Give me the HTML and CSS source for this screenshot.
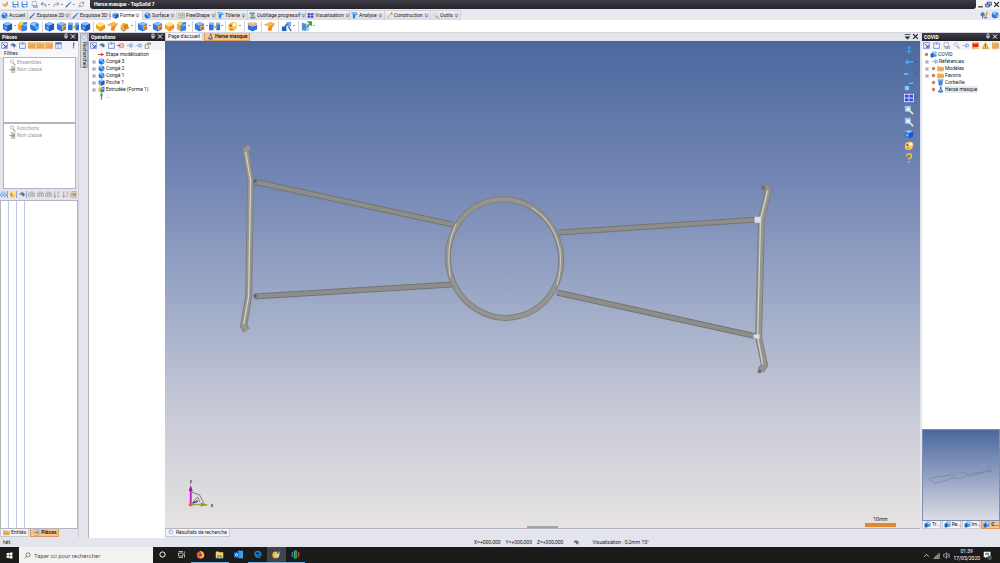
FILE: index.html
```html
<!DOCTYPE html>
<html lang="fr">
<head>
  <meta charset="UTF-8">
  <meta name="viewport" content="width=device-width, initial-scale=1.0">
  <title>Herse masque - TopSolid 7</title>
  <link rel="stylesheet" href="styles.css">
</head>
<body>
  <!-- Icon set -->
  <svg class="sprite" aria-hidden="true">
    <symbol id="cube" viewBox="0 0 12 12">
      <path d="M1 3l5-2 5 2v6l-5 2.500-5-2.500z" fill="#2f74e6"/>
      <path d="M1 3l5-2 5 2-5 2.200z" fill="#8cc0fb"/>
      <path d="M6 5.200L11 3v6l-5 2.500z" fill="#2456b8"/>
      <path d="M3 6l2 1v2L3 8z" fill="#9fd0fb"/>
    </symbol>
    <symbol id="cube-cut" viewBox="0 0 12 12">
      <path d="M1 3l5-2 5 2v6l-5 2.500-5-2.500z" fill="#3478e4"/>
      <path d="M1 3l5-2 5 2-5 2.200z" fill="#8cc0fb"/>
      <path d="M6 6l5-2v3.500L7 10z" fill="#f3a33a"/>
      <path d="M8 7l3-1v2l-3 1z" fill="#d9631c"/>
    </symbol>
    <symbol id="cube-half" viewBox="0 0 12 12">
      <path d="M1 3l5-2v10.500L1 9z" fill="#f0a63c"/>
      <path d="M5 2l6-1v9l-6 1.500z" fill="#3a7fe4"/>
      <path d="M2 1l4-1 1 4-4 1z" fill="#f8d56b"/>
      <path d="M7 4l4-1v2l-4 1z" fill="#7fb6f8"/>
    </symbol>
    <symbol id="cut-base" viewBox="0 0 12 12">
      <path d="M1 4l5 2 5-2v5l-5 2.500L1 9z" fill="#2c72e0"/>
      <path d="M1 2l5-1 5 1v2L6 6 1 4z" fill="#f5b277"/>
      <path d="M3 2l3-1 3 1-3 1z" fill="#cfe4fb"/>
    </symbol>
    <symbol id="ball" viewBox="0 0 12 12">
      <circle cx="6" cy="6" r="5" fill="#2a72dc"/>
      <path d="M2 4a5 5 0 0 1 7-2L6 6z" fill="#92c8fa"/>
      <path d="M6 6l5-1a5 5 0 0 1-3 5z" fill="#4fb0f0"/>
    </symbol>
    <symbol id="pair" viewBox="0 0 12 12">
      <path d="M0 2h5v8H0zM8 2h4v8H8z" fill="#2f72dc"/>
      <path d="M0 2h5v2H0zM8 2h4v2H8z" fill="#7db8fa"/>
      <path d="M5 5h3v3H5z" fill="#d9bd4a"/>
    </symbol>
    <symbol id="orange" viewBox="0 0 12 12">
      <path d="M1 4l5-3 5 3v4l-5 3.500L1 8z" fill="#f5a61f"/>
      <path d="M1 4l5-3 5 3-5 2.500z" fill="#fdea8a"/>
      <path d="M6 6.500L11 4v4l-5 3.500z" fill="#ee8c28"/>
    </symbol>
    <symbol id="sheet" viewBox="0 0 12 12">
      <path d="M0 4l7-3 5 2-3 4-1 4-4-1 1-4z" fill="#f08a21"/>
      <path d="M0 4l7-3 5 2-6 3z" fill="#fbb85b"/>
    </symbol>
    <symbol id="wedge" viewBox="0 0 12 12">
      <path d="M1 8l3-6 5 1 2 5-5 3z" fill="#f5b23e"/>
      <path d="M4 5l5-2 2 5-5 1z" fill="#e2841d"/>
      <path d="M2 9l3 2 2-1" fill="none" stroke="#7b6c4a"/>
    </symbol>
    <symbol id="chisel" viewBox="0 0 12 12">
      <path d="M2 10L9 3" stroke="#e8a04a" stroke-width="1.500"/>
      <path d="M8 1l3 3" stroke="#b5763a" stroke-width="2"/>
    </symbol>
    <symbol id="save" viewBox="0 0 12 12">
      <path d="M1 1h10v10H1z" fill="#4d8fd8"/>
      <path d="M3 1h6v4H3zM3 7h6v4H3z" fill="#fff"/>
      <path d="M4 8h2v3H4z" fill="#2f5f9d"/>
    </symbol>
    <symbol id="save-gray" viewBox="0 0 12 12">
      <path d="M2 1h7v7H2z" fill="#fff" stroke="#7c879a"/>
      <path d="M4 8h7v3H4z" fill="#c0c5cf" stroke="#7c879a"/>
    </symbol>
    <symbol id="undo" viewBox="0 0 12 12">
      <path d="M2 5h5q4 0 3 5M5 2L2 5l3 3" fill="none" stroke="#70757f" stroke-width="1.500"/>
    </symbol>
    <symbol id="redo" viewBox="0 0 12 12">
      <path d="M10 5H5q-4 0-3 5M7 2l3 3-3 3" fill="none" stroke="#8a8e96" stroke-width="1.500"/>
    </symbol>
    <symbol id="pen" viewBox="0 0 12 12">
      <path d="M2 10L10 2" stroke="#2471d8" stroke-width="2"/>
      <path d="M1 11l3-1-2-2z" fill="#333"/>
      <circle cx="10" cy="2" r="1.500" fill="#8ec2f6"/>
    </symbol>
    <symbol id="refresh" viewBox="0 0 12 12">
      <path d="M2 5q4-5 8-1M10 7q-4 5-8 1M10 1v3H7M2 11V8h3" fill="none" stroke="#858b94" stroke-width="1.300"/>
    </symbol>
    <symbol id="logo" viewBox="0 0 12 12">
      <path d="M1 4l5 1v5H4L1 7z" fill="#f1b92e"/>
      <path d="M5 8l5-7v5L6 10z" fill="#ef8a3c"/>
      <path d="M6 5l4-4" stroke="#5d86c9"/>
    </symbol>
    <symbol id="select" viewBox="0 0 12 12">
      <path d="M1 1h10v10H1z" fill="#e8eefc" stroke="#4763c4"/>
      <path d="M3 3l6 6M9 5v4H5" stroke="#2645b4" stroke-width="1.500" fill="none"/>
    </symbol>
    <symbol id="bird" viewBox="0 0 12 12">
      <path d="M0 6l4-4 4 1 4 5-3-2v3H6L4 6z" fill="#5e739f"/>
    </symbol>
    <symbol id="frame" viewBox="0 0 12 12">
      <path d="M1 2h3M8 2h3M1 2v9h10V2M5 1h2v3H5z" fill="none" stroke="#5a83cd" stroke-width="1.300"/>
    </symbol>
    <symbol id="folder" viewBox="0 0 12 12">
      <path d="M1 3h4l1 1h5v6H1z" fill="#f9c55c" stroke="#c98a3b"/>
      <path d="M3 7h6" stroke="#99663c"/>
    </symbol>
    <symbol id="window" viewBox="0 0 12 12">
      <path d="M1 1h10v10H1z" fill="#eaf0fc" stroke="#6b82be"/>
      <path d="M1 1h10v3H1z" fill="#4a73c8"/>
      <path d="M5 4v7" stroke="#6b82be"/>
    </symbol>
    <symbol id="arrow-r" viewBox="0 0 12 12">
      <path d="M0 5h5V3l6 3-6 3V7H0z" fill="#c8503c"/>
    </symbol>
    <symbol id="insert" viewBox="0 0 12 12">
      <path d="M4 3h7v6H4z" fill="#f8cfbf" stroke="#cf5a3c"/>
      <path d="M0 6h6" stroke="#cf3c28" stroke-width="1.500"/>
    </symbol>
    <symbol id="node" viewBox="0 0 12 12">
      <path d="M1 6h4l3-4M5 6l3 4" stroke="#6d8fce" fill="none"/>
      <path d="M7 4h4v4H7z" fill="#e3ecfb" stroke="#5a83cb"/>
    </symbol>
    <symbol id="export" viewBox="0 0 12 12">
      <path d="M2 4h6v7H2z" fill="#e4f5e4" stroke="#3d8a3d"/>
      <path d="M5 2h6v3" fill="none" stroke="#c33b2a" stroke-width="1.500"/>
    </symbol>
    <symbol id="sheet-out" viewBox="0 0 12 12">
      <path d="M1 2l5 1v8l-5-1z" fill="#4d93dc"/>
      <path d="M6 3h3v7l-3 1z" fill="#a9cdf3"/>
      <path d="M6 7l4-4M8 1h4v4z" stroke="#39a545" stroke-width="1.500" fill="#39a545"/>
    </symbol>
    <symbol id="move" viewBox="0 0 12 12">
      <path d="M6 1h5v5H6z" fill="#7da9e4"/>
      <path d="M1 6h5v5H1z" fill="#1f5fc4"/>
      <path d="M8 6l3 5M4 6l3-3" stroke="#2c5ca8" stroke-width="1.300"/>
    </symbol>
    <symbol id="bang" viewBox="0 0 12 12">
      <path d="M5 1h3L7 8H5z" fill="#2c8cd8"/>
      <circle cx="6" cy="10" r="1.300" fill="#2c8cd8"/>
    </symbol>
    <symbol id="bang-green" viewBox="0 0 12 12">
      <path d="M4 1h4v2L7 8H5L4 3z" fill="#3aa545"/>
      <circle cx="6" cy="10" r="1.500" fill="#3aa545"/>
    </symbol>
    <symbol id="pin" viewBox="0 0 12 12">
      <path d="M4 1h4v6H4zM2 7h8M6 7v4" fill="none" stroke="currentColor" stroke-width="1.300"/>
    </symbol>
    <symbol id="close" viewBox="0 0 12 12">
      <path d="M2 2l8 8M10 2l-8 8" stroke="currentColor" stroke-width="2"/>
    </symbol>
    <symbol id="drop" viewBox="0 0 12 12">
      <path d="M1 2h10v1.500H1zM1 6h10l-5 5z" fill="currentColor"/>
    </symbol>
    <symbol id="minimize" viewBox="0 0 12 12"><path d="M2 9h8v2H2z" fill="#222"/></symbol>
    <symbol id="restore" viewBox="0 0 12 12">
      <path d="M4 2h7v5H4zM1 5h7v5H1z" fill="#e2e9fa" stroke="#2c478c" stroke-width="1.500"/>
    </symbol>
    <symbol id="mill" viewBox="0 0 12 12">
      <path d="M1 4q3-4 6 0v3H5v4H3V7H1z" fill="#3f78c4"/>
      <path d="M8 10L11 1" stroke="#e79531" stroke-width="2"/>
      <path d="M6 9h5v2H6z" fill="#5487cf"/>
    </symbol>
    <symbol id="fold" viewBox="0 0 12 12">
      <path d="M0 1h9l3 3-4 1-2 7-3-2V4z" fill="#2f86dd"/>
      <path d="M0 1h9l3 3H3z" fill="#7cc0f5"/>
    </symbol>
    <symbol id="grid" viewBox="0 0 12 12">
      <path d="M1 2h10v8H1z" fill="#e6e8d4" stroke="#8f9a72"/>
      <path d="M1 5q5 3 10 0M5 2v8M8 2v8" stroke="#8f9a72" fill="none"/>
    </symbol>
    <symbol id="tooling" viewBox="0 0 12 12">
      <path d="M1 1h9v3H1zM2 8h9v3H2z" fill="#6f8fb4"/>
      <path d="M3 4h6v4H3z" fill="#7cb583"/>
    </symbol>
    <symbol id="gray-node" viewBox="0 0 12 12">
      <path d="M4 1h6v10H4z" fill="#e8e8e8" stroke="#9a9a9a"/>
      <path d="M0 6h6M6 4h3v4H6z" fill="#999" stroke="#888"/>
    </symbol>
    <symbol id="gray-link" viewBox="0 0 12 12">
      <path d="M1 4h4v5H1zM7 4h4v5H7zM3 2h7" fill="#ddd" stroke="#888"/>
    </symbol>
    <symbol id="pair-lens" viewBox="0 0 12 12">
      <path d="M2 2h8" stroke="#5b87cf"/>
      <circle cx="3" cy="7" r="2.500" fill="#cfe3fb" stroke="#3e76cf"/>
      <circle cx="9" cy="7" r="2.500" fill="#cfe3fb" stroke="#3e76cf"/>
    </symbol>
    <symbol id="sort" viewBox="0 0 12 12">
      <path d="M3 1v9M1 8l2 3 2-3M7 2h4M8 5h3M7 9h4" fill="none" stroke="#777"/>
    </symbol>
    <symbol id="lens" viewBox="0 0 12 12">
      <path d="M1 1h7v7H1z" fill="#b4d0f2"/>
      <circle cx="5" cy="5" r="3" fill="#eaf5fe" stroke="#7fa6d8"/>
      <path d="M7 7l4 4" stroke="#e9e2c6" stroke-width="2"/>
    </symbol>
    <symbol id="gray-lens" viewBox="0 0 12 12">
      <circle cx="5" cy="4" r="3" fill="#f2f2f2" stroke="#aaa"/>
      <path d="M7 7l4 4" stroke="#999" stroke-width="2"/>
    </symbol>
    <symbol id="view-up" viewBox="0 0 12 12"><path d="M6 1l3 3H7v3h3v1H7v3H5V8H2V7h3V4H3z" fill="#2ea0ee"/></symbol>
    <symbol id="view-left" viewBox="0 0 12 12"><path d="M5 2L1 6l4 4V7h6V5H5z" fill="#3fa9f3"/></symbol>
    <symbol id="view-right" viewBox="0 0 12 12">
      <path d="M0 5h5v2H0z" fill="#62bbf7"/><path d="M7 4h4v4H7z" fill="#2987df"/>
    </symbol>
    <symbol id="view-iso" viewBox="0 0 12 12">
      <path d="M6 1h5v5H6z" fill="#2b78d6"/><path d="M1 6h5v5H1z" fill="#85c5f7"/><path d="M6 3l5-1" stroke="#b9dffc"/>
    </symbol>
    <symbol id="view-grid" viewBox="0 0 12 12">
      <path d="M0 1h12v10H0z" fill="#d9e0ff"/><path d="M1 2h4.500v3.500H1zM6.500 2H11v3.500H6.500zM1 6.500h4.500V10H1zM6.500 6.500H11V10H6.500z" fill="#3c48d9"/>
    </symbol>
    <symbol id="pic-node" viewBox="0 0 12 12">
      <path d="M4 1h7v9H4z" fill="#4da0ea"/><path d="M1 4h5v7H1z" fill="#2a5cae"/><path d="M6 2h4v3H6z" fill="#b9dffc"/>
    </symbol>
    <symbol id="palette" viewBox="0 0 12 12">
      <path d="M1 7q0-6 6-6 5 0 4 5-1 5-6 5-4 0-4-4z" fill="#f3c95b"/>
      <circle cx="4" cy="5" r="1.300" fill="#cf3e2a"/><circle cx="8" cy="4" r="1.800" fill="#fff"/><circle cx="5" cy="9" r="1.300" fill="#d9812c"/>
    </symbol>
    <symbol id="help" viewBox="0 0 12 12">
      <path d="M3 4q0-3 3-3t3 3q0 2-3 3v1" fill="none" stroke="#e8c23c" stroke-width="1.800"/><circle cx="6" cy="10.500" r="1.200" fill="#e8c23c"/>
    </symbol>
    <symbol id="flag" viewBox="0 0 12 12"><path d="M1 2l5 1 5-1v6L6 9 2 8v3H1z" fill="#d92a1c"/></symbol>
    <symbol id="warn" viewBox="0 0 12 12">
      <path d="M6 1l5 10H1z" fill="#fbd029" stroke="#a37c10"/><path d="M6 4v4M6 9v1" stroke="#222"/>
    </symbol>
    <symbol id="bin" viewBox="0 0 12 12"><path d="M2 3h8l-1 8H3zM1 1h10v1.500H1z" fill="#3e86d8"/></symbol>
    <symbol id="part" viewBox="0 0 12 12">
      <path d="M5 1h3v4l3 5-5 2-5-2 4-5z" fill="#3a80d9"/><path d="M4 8l3-3v4z" fill="#bcdcfb"/>
    </symbol>
    <symbol id="part-gray" viewBox="0 0 12 12">
      <path d="M5 1h3v4l3 5-5 2-5-2 4-5z" fill="#6d7889"/><path d="M4 8l3-3v4z" fill="#cfd8e4"/>
    </symbol>
    <symbol id="star" viewBox="0 0 12 12"><circle cx="6" cy="6" r="4" fill="#d07a52"/></symbol>
  </svg>

  <header class="titlebar">
    <div class="quick">
      <button aria-label="Menu"><svg class="icon"><use href="#logo"/></svg></button>
      <button aria-label="Enregistrer"><svg class="icon"><use href="#save"/></svg></button>
      <button aria-label="Enregistrer tout"><svg class="icon"><use href="#save"/></svg></button>
      <button aria-label="Archiver"><svg class="icon"><use href="#save-gray"/></svg></button>
      <button class="more" aria-label="Annuler"><svg class="icon"><use href="#undo"/></svg></button>
      <button class="more" aria-label="Rétablir"><svg class="icon"><use href="#redo"/></svg></button>
      <button class="more" aria-label="Crayon"><svg class="icon"><use href="#pen"/></svg></button>
      <button aria-label="Rafraîchir"><svg class="icon"><use href="#refresh"/></svg></button>
    </div>
    <h1>Herse masque - TopSolid 7</h1>
    <div class="window-buttons">
      <button aria-label="Réduire"><svg class="icon"><use href="#minimize"/></svg></button>
      <button aria-label="Restaurer"><svg class="icon"><use href="#restore"/></svg></button>
      <button aria-label="Fermer"><svg class="icon"><use href="#close"/></svg></button>
    </div>
  </header>

  <nav class="ribbon">
    <button class="plain"><svg class="icon"><use href="#ball"/></svg>Accueil</button>
    <button><svg class="icon"><use href="#pen"/></svg>Esquisse 2D<svg class="mini"><use href="#drop"/></svg></button>
    <button><svg class="icon"><use href="#pen"/></svg>Esquisse 3D<svg class="mini"><use href="#drop"/></svg></button>
    <button class="active"><svg class="icon"><use href="#cube"/></svg>Forme<svg class="mini"><use href="#drop"/></svg></button>
    <button><svg class="icon"><use href="#ball"/></svg>Surface<svg class="mini"><use href="#drop"/></svg></button>
    <button><svg class="icon"><use href="#grid"/></svg>FreeShape<svg class="mini"><use href="#drop"/></svg></button>
    <button><svg class="icon"><use href="#fold"/></svg>Tôlerie<svg class="mini"><use href="#drop"/></svg></button>
    <button><svg class="icon"><use href="#tooling"/></svg>Outillage progressif<svg class="mini"><use href="#drop"/></svg></button>
    <button><svg class="icon"><use href="#view-grid"/></svg>Visualisation<svg class="mini"><use href="#drop"/></svg></button>
    <button><svg class="icon"><use href="#fold"/></svg>Analyse<svg class="mini"><use href="#drop"/></svg></button>
    <button><svg class="icon"><use href="#chisel"/></svg>Construction<svg class="mini"><use href="#drop"/></svg></button>
    <button><svg class="icon"><use href="#gray-lens"/></svg>Outils<svg class="mini"><use href="#drop"/></svg></button>
    <span class="ribbon-end">
      <svg><use href="#mill"/></svg>
      <svg><use href="#ball"/></svg>
    </span>
  </nav>

  <div class="toolbar">
    <div class="group">
      <button class="more" aria-label="Extrudée"><svg><use href="#cube"/></svg></button>
      <button aria-label="Tournée"><svg><use href="#cube-half"/></svg></button>
      <button aria-label="Sphère"><svg><use href="#ball"/></svg></button>
    </div>
    <div class="group">
      <button aria-label="Poche"><svg><use href="#cube"/></svg></button>
      <button aria-label="Bossage"><svg><use href="#cube-cut"/></svg></button>
      <button aria-label="Répétition"><svg><use href="#pair"/></svg></button>
      <button aria-label="Coque"><svg><use href="#cube"/></svg></button>
    </div>
    <div class="group">
      <button aria-label="Congé"><svg><use href="#orange"/></svg></button>
      <button aria-label="Chanfrein"><svg><use href="#sheet"/></svg></button>
      <button class="more" aria-label="Dépouille"><svg><use href="#wedge"/></svg></button>
    </div>
    <div class="group">
      <button class="more" aria-label="Perçage"><svg><use href="#cube-cut"/></svg></button>
      <button aria-label="Rainure"><svg><use href="#cube-cut"/></svg></button>
      <button aria-label="Nervure"><svg><use href="#orange"/></svg></button>
      <button class="more" aria-label="Gravure"><svg><use href="#cube-half"/></svg></button>
    </div>
    <div class="group">
      <button class="more" aria-label="Union"><svg><use href="#cube-cut"/></svg></button>
      <button class="more" aria-label="Symétrie"><svg><use href="#pair"/></svg></button>
    </div>
    <div class="group wide">
      <button class="more" aria-label="Couleur"><svg><use href="#palette"/></svg></button>
    </div>
    <div class="group wide">
      <button aria-label="Coupe"><svg><use href="#cut-base"/></svg></button>
    </div>
    <div class="group wide">
      <button aria-label="Face"><svg><use href="#sheet"/></svg></button>
    </div>
    <div class="group wide">
      <button class="more" aria-label="Déplacer"><svg><use href="#move"/></svg></button>
    </div>
    <div class="group">
      <button class="more" aria-label="Exporter"><svg><use href="#sheet-out"/></svg></button>
    </div>
  </div>

  <main class="workspace">
    <section class="panel parts">
      <h2>Pièces<span><svg class="icon"><use href="#pin"/></svg><svg class="icon"><use href="#close"/></svg></span></h2>
      <div class="tools">
        <svg class="icon"><use href="#select"/></svg>
        <svg class="icon"><use href="#bird"/></svg>
        <svg class="icon"><use href="#frame"/></svg>
        <span class="on"><svg class="icon"><use href="#folder"/></svg><svg class="icon"><use href="#folder"/></svg><svg class="icon"><use href="#folder"/></svg></span>
        <svg class="icon"><use href="#window"/></svg>
        <svg class="icon last"><use href="#bang"/></svg>
      </div>
      <p class="filter-label">Filtres</p>
      <ul class="tree muted box">
        <li><svg class="icon"><use href="#gray-lens"/></svg>Ensembles</li>
        <li><svg class="icon"><use href="#gray-node"/></svg>Non classé</li>
      </ul>
      <ul class="tree muted box">
        <li><svg class="icon"><use href="#gray-lens"/></svg>Fonctions</li>
        <li><svg class="icon"><use href="#gray-node"/></svg>Non classé</li>
      </ul>
      <div class="column-tools">
        <span><svg class="icon"><use href="#pair-lens"/></svg></span>
        <span><svg class="icon"><use href="#palette"/></svg></span>
        <span><svg class="icon"><use href="#bird"/></svg></span>
        <svg class="icon"><use href="#gray-link"/></svg>
        <svg class="icon"><use href="#gray-link"/></svg>
        <svg class="icon"><use href="#gray-link"/></svg>
        <svg class="icon"><use href="#sort"/></svg>
        <svg class="icon"><use href="#sort"/></svg>
        <svg class="icon on"><use href="#gray-node"/></svg>
      </div>
      <div class="columns"><i></i><i></i><i></i></div>
      <div class="tabs">
        <button><svg class="icon"><use href="#folder"/></svg>Entités</button>
        <button class="active"><svg class="icon"><use href="#gray-node"/></svg>Pièces</button>
      </div>
    </section>

    <div class="side-strip">
      <button><svg class="icon"><use href="#lens"/></svg>Recherches</button>
    </div>

    <section class="panel operations">
      <h2>Opérations<span><svg class="icon"><use href="#pin"/></svg><svg class="icon"><use href="#close"/></svg></span></h2>
      <div class="tools">
        <svg class="icon"><use href="#select"/></svg>
        <svg class="icon"><use href="#bird"/></svg>
        <svg class="icon"><use href="#frame"/></svg>
        <svg class="icon"><use href="#insert"/></svg>
        <svg class="icon"><use href="#node"/></svg>
        <svg class="icon"><use href="#node"/></svg>
        <svg class="icon"><use href="#export"/></svg>
      </div>
      <ul class="tree fill">
        <li><b></b><svg class="icon"><use href="#arrow-r"/></svg>Étape modélisation</li>
        <li><b class="plus"></b><svg class="icon"><use href="#ball"/></svg>Congé 3</li>
        <li><b class="plus"></b><svg class="icon"><use href="#ball"/></svg>Congé 2</li>
        <li><b class="plus"></b><svg class="icon"><use href="#ball"/></svg>Congé 1</li>
        <li><b class="plus"></b><svg class="icon"><use href="#cube"/></svg>Poche 1</li>
        <li><b class="plus"></b><svg class="icon"><use href="#cube-half"/></svg>Extrudée (Forme 1)</li>
        <li><b></b><svg class="icon"><use href="#bang-green"/></svg>...</li>
      </ul>
    </section>

    <section class="document">
      <div class="tabs top">
        <button>Page d'accueil</button>
        <button class="active"><svg class="icon"><use href="#part-gray"/></svg>Herse masque</button>
        <span class="tab-end"><svg class="icon"><use href="#drop"/></svg><svg class="icon"><use href="#close"/></svg></span>
      </div>
      <div class="viewport">
        <svg class="model" viewBox="165 41 755 488" role="img" aria-label="Herse masque">
          <defs>
            <g id="rods">
              <path d="M254 182L453 225M254 297L452 285M559 233L757 220M557 293L757 337"/>
            </g>
            <g id="posts">
              <path d="M249 147L245 150L250 180L248 297L243 327L246 331"/>
              <path d="M765 187L769 190L762 219L759 338L765 366L761 371"/>
            </g>
            <g id="ring"><ellipse cx="504.500" cy="259" rx="56.500" ry="59.500" transform="rotate(-14 504.500 259)"/></g>
          </defs>
          <g fill="none" stroke-linejoin="round">
            <g stroke="#737574" stroke-width="6"><use href="#rods"/></g>
            <g stroke="#8d8e8a" stroke-width="4"><use href="#rods"/></g>
            <g stroke="#7e7f7c" stroke-width="7"><use href="#posts"/><use href="#ring" stroke-width="6"/></g>
            <g stroke="#969691" stroke-width="5"><use href="#posts"/><use href="#ring" stroke-width="4"/></g>
            <path d="M245 152L250 181L248 297L243 325M768 191L761 220L758 337L763 365" stroke="#d3d0c8" stroke-width="1.300"/>
            <path d="M450 278Q445 246 456 224M532 208Q554 222 560 250Q562 270 557 286" stroke="#cfccc4"/>
          </g>
          <path d="M755 217h6v6h-6zM754 335h6v4h-6z" fill="#dcdfe8"/>
          <path d="M253 180h3v3h-3zM253 295h3v3h-3z" fill="#5c6065"/>
          <circle cx="764" cy="188" r="2" fill="#6b6d6e"/>
          <circle cx="760" cy="372" r="2" fill="#6b6d6e"/>
          <!-- axis triad -->
          <path d="M190 505V490" stroke="#c317c3" stroke-width="1.800"/>
          <path d="M188 492l2-6 2 6z" fill="#a312a6"/>
          <path d="M190 505.500h14" stroke="#a9a52c" stroke-width="1.500"/>
          <path d="M200 503.500l8 2.500-8 1.500z" fill="#8b9b1e"/>
          <path d="M191 493l8 3 4 8M192 503l5-5 2 5" fill="none" stroke="#666a72" stroke-width=".8"/>
          <path d="M192 504l5-2" stroke="#3335b5" stroke-width="1.500"/>
          <circle cx="190" cy="505.500" r="2" fill="#dc6a25"/>
          <text x="189" y="484">y</text>
          <text x="210" y="508">x</text>
        </svg>
        <div class="view-tools">
          <button aria-label="Centrer"><svg class="icon"><use href="#view-up"/></svg></button>
          <button class="more" aria-label="Vue précédente"><svg class="icon"><use href="#view-left"/></svg></button>
          <button class="more" aria-label="Vue de face"><svg class="icon"><use href="#view-right"/></svg></button>
          <button aria-label="Perspective"><svg class="icon"><use href="#view-iso"/></svg></button>
          <button class="more" aria-label="Vues multiples"><svg class="icon"><use href="#view-grid"/></svg></button>
          <button aria-label="Zoom"><svg class="icon"><use href="#lens"/></svg></button>
          <button aria-label="Zoom fenêtre"><svg class="icon"><use href="#lens"/></svg></button>
          <button aria-label="Rendu"><svg class="icon"><use href="#cube"/></svg></button>
          <button aria-label="Couleurs"><svg class="icon"><use href="#palette"/></svg></button>
          <button aria-label="Aide"><svg class="icon"><use href="#help"/></svg></button>
        </div>
        <div class="scale">10mm</div>
        <div class="handle"></div>
      </div>
      <div class="tabs">
        <button class="results"><svg class="icon"><use href="#lens"/></svg>Résultats de recherche</button>
      </div>
    </section>

    <aside class="panel project">
      <h2>COVID<span><svg class="icon"><use href="#pin"/></svg><svg class="icon"><use href="#close"/></svg></span></h2>
      <div class="tools">
        <svg class="icon"><use href="#select"/></svg>
        <svg class="icon"><use href="#frame"/></svg>
        <svg class="icon"><use href="#save-gray"/></svg>
        <svg class="icon"><use href="#gray-lens"/></svg>
        <svg class="icon"><use href="#node"/></svg>
        <span class="on"><svg class="icon"><use href="#flag"/></svg></span>
        <svg class="icon"><use href="#warn"/></svg>
        <span class="on"><svg class="icon"><use href="#folder"/></svg></span>
      </div>
      <ul class="tree">
        <li><svg class="mini"><use href="#star"/></svg><svg class="icon"><use href="#pic-node"/></svg>COVID</li>
        <li><b class="plus"></b><svg class="icon"><use href="#node"/></svg>Références</li>
        <li><b class="plus"></b><svg class="mini"><use href="#star"/></svg><svg class="icon"><use href="#folder"/></svg>Modèles</li>
        <li><b class="plus"></b><svg class="mini"><use href="#star"/></svg><svg class="icon"><use href="#folder"/></svg>Favoris</li>
        <li><b></b><svg class="mini"><use href="#star"/></svg><svg class="icon"><use href="#bin"/></svg>Corbeille</li>
        <li><b></b><svg class="mini"><use href="#star"/></svg><svg class="icon"><use href="#part"/></svg><mark>Herse masque</mark></li>
      </ul>
      <div class="preview">
        <svg viewBox="0 0 78 91" role="img" aria-label="Aperçu">
          <g fill="none" stroke="#777d8a" stroke-width=".6">
            <path d="M6 50l7 5M6 49l26-4M13 54l20-6M45 45l24-4M46 47l24-6M66 36l5 7"/>
            <ellipse cx="39" cy="46" rx="7" ry="3" transform="rotate(-8 39 46)" stroke-dasharray="3 1"/>
          </g>
        </svg>
      </div>
      <div class="tabs">
        <button><svg class="icon"><use href="#pic-node"/></svg>Tr...</button>
        <button><svg class="icon"><use href="#pic-node"/></svg>Re...</button>
        <button><svg class="icon"><use href="#pic-node"/></svg>Im...</button>
        <button class="active"><svg class="icon"><use href="#pic-node"/></svg>C...</button>
      </div>
    </aside>
  </main>

  <footer class="status">
    <span class="hint">hêt.</span>
    <span class="coords"><span>X=+000,000</span><span>Y=+000,000</span><span>Z=+000,000</span></span>
    <svg class="icon"><use href="#bird"/></svg>
    <span>Visualisation : 0,2mm 15°</span>
  </footer>

  <div class="taskbar">
    <button class="start" aria-label="Démarrer">
      <svg viewBox="0 0 12 12"><path d="M1 2l4.500-.7v4.400H1zM6.200 1.200L11 .5v5.200H6.200zM1 6.300h4.500v4.400L1 10zM6.200 6.300H11v5.200l-4.800-.7z" fill="#fff"/></svg>
    </button>
    <label class="search">
      <svg viewBox="0 0 12 12"><circle cx="7" cy="5" r="3.500" fill="none" stroke="#333"/><path d="M4.500 7.500L1 11" stroke="#333"/></svg>
      <input type="text" placeholder="Taper ici pour rechercher" aria-label="Rechercher">
    </label>
    <div class="apps">
      <button aria-label="Cortana"><svg viewBox="0 0 12 12"><circle cx="6" cy="6" r="3.500" fill="none" stroke="#fff" stroke-width="1.300"/></svg></button>
      <button aria-label="Applications"><svg viewBox="0 0 12 12"><path d="M2 4h6v4H2zM2 2h6M2 10h6M10 2v2M10 5v5" fill="none" stroke="#ddd"/></svg></button>
      <button class="open" aria-label="Firefox"><svg viewBox="0 0 12 12"><circle cx="6" cy="6.500" r="5" fill="#f0572b"/><path d="M5 1q5 1 6 5 0 5-5 5-2-1-2-3 4 1 4-2z" fill="#fbbb35"/><circle cx="6" cy="6.500" r="2" fill="#7845c4"/></svg></button>
      <button class="open" aria-label="Explorateur"><svg viewBox="0 0 12 12"><path d="M1 2h4l1 1h5v8H1z" fill="#f7cf5c"/><path d="M3 7h6v4H3z" fill="#3f9be0"/><path d="M5 9h2v2H5z" fill="#f7cf5c"/></svg></button>
      <button aria-label="Outlook"><svg viewBox="0 0 12 12"><path d="M5 1h7v10H5z" fill="#35a5e8"/><path d="M0 3h7v7H0z" fill="#0f6cc1"/><circle cx="3.500" cy="6.500" r="1.700" fill="none" stroke="#fff"/></svg></button>
      <button class="open" aria-label="Edge"><svg viewBox="0 0 12 12"><path d="M2 6q1-4 4.500-4t4 4.500H3.500q0 4 6.500 3" fill="none" stroke="#1688e2" stroke-width="2"/></svg></button>
      <button class="open current" aria-label="TopSolid"><svg viewBox="0 0 12 12"><circle cx="5" cy="6.500" r="4.500" fill="#f0bf39"/><path d="M4 8l7-7-2 8z" fill="#d7e4f7"/><path d="M7 5l4-4" stroke="#2b6ad0" stroke-width="2"/></svg></button>
      <button class="open" aria-label="TopSolid Manager"><svg viewBox="0 0 12 12"><path d="M1 3l2-1v8l-2-1z" fill="#2f7de0"/><path d="M4 1l2-1v12l-2-1z" fill="#43b852"/><path d="M6 0l2 1v10l-2 1z" fill="#2b9950"/><path d="M9 2l2 1v6l-2 1z" fill="#c8413f"/></svg></button>
    </div>
    <div class="tray">
      <svg viewBox="0 0 12 12"><path d="M2 8l4-4 4 4" fill="none" stroke="#ddd" stroke-width="1.500"/></svg>
      <svg viewBox="0 0 12 12"><path d="M1 11L11 2v9zM5 11V7M8 11V5" fill="#666" stroke="#bbb"/></svg>
      <svg viewBox="0 0 12 12"><path d="M1 4h2l3-3v10L3 8H1zM8 3q2 3 0 6M10 2q3 4 0 8" fill="none" stroke="#ddd"/></svg>
      <time>01:39<br>17/05/2020</time>
      <svg class="notice" viewBox="0 0 12 12"><path d="M1 1h9v7H5l-2 2V8H1z" fill="#fff"/><path d="M3 3h5M3 5h5" stroke="#333"/><circle cx="9" cy="9" r="3" fill="#555"/></svg>
    </div>
  </div>
</body>
</html>
```
FILE: styles.css
```css
:root {
  --chrome: #e4e4ec;
  --line: #b3b4bf;
  --dark: #2b2a31;
  --accent: #f9c48d;
  --sky: linear-gradient(#4b689d, #7184b3 27%, #97a5c5 50%, #c6c8d6 75%, #e6e3e2);
}

* {
  box-sizing: border-box;
}

body {
  margin: 0;
  min-height: 100vh;
  display: flex;
  flex-direction: column;
  background: var(--chrome);
  color: #222;
  font-family: Roboto, "Open Sans", sans-serif;
  font-size: 5px;
  line-height: 7px;
}

h1, h2, p, ul {
  margin: 0;
  padding: 0;
  font-size: 5px;
}

button {
  display: flex;
  align-items: center;
  padding: 0;
  border: 0;
  background: none;
  color: inherit;
  font: inherit;
  white-space: nowrap;
}

svg {
  flex: none;
}

.sprite {
  position: absolute;
  width: 0;
  height: 0;
}

.icon {
  width: 7px;
  height: 7px;
}

.mini {
  width: 5px;
  height: 5px;
}

.more::after {
  content: "";
  margin-left: 1px;
  border: 1px solid transparent;
  border-top-color: #333;
}

/* Title bar */
.titlebar {
  display: flex;
  height: 9px;
  background: #f4f4f8;
}

.quick {
  width: 90px;
  padding: 0 5px 0 2px;
  display: flex;
  justify-content: space-between;
}

.titlebar h1 {
  flex: 1;
  padding-left: 4px;
  border-radius: 0 0 3px 3px;
  background: linear-gradient(#3e3d46, #25242a);
  color: #fff;
  line-height: 8px;
}

.window-buttons {
  width: 24px;
  display: flex;
  justify-content: space-around;
}

/* Ribbon */
.ribbon {
  display: grid;
  grid-template-columns: 28px 43px 40px 32px 34px 39px 32px 58px 44px 35px 46px 30px 1fr;
  height: 11px;
  padding-top: 1px;
  background: #e9e9f0;
}

.ribbon button {
  padding: 0 2px 0 1px;
  gap: 1px;
  border: 1px solid #cfd0d8;
  border-width: 1px 1px 0 0;
  background: linear-gradient(#f0f0f5, #d9dae2);
}

.ribbon button .mini {
  margin-left: auto;
  color: #888;
}

.ribbon .active {
  background: #fff;
}

.ribbon-end {
  display: flex;
  justify-content: flex-end;
  align-items: center;
  gap: 3px;
  padding-right: 1px;
}

.ribbon-end svg {
  width: 8px;
  height: 8px;
}

.toolbar {
  display: flex;
  align-items: center;
  height: 13px;
  padding-left: 2px;
  background: #fff;
  border-bottom: 1px solid #d5d5dd;
}

.group {
  display: flex;
  gap: 1px;
  padding-right: 2px;
  margin-right: 1px;
  border-right: 1px solid #d4d4da;
}

.wide {
  padding-right: 3px;
  margin-right: 2px;
}

.group:last-child {
  border: 0;
}

.toolbar svg {
  width: 11px;
  height: 11px;
}

/* Workspace */
.workspace {
  flex: 1;
  display: flex;
  min-height: 0;
}

.panel {
  display: flex;
  flex-direction: column;
}

.panel h2 {
  display: flex;
  justify-content: space-between;
  height: 8px;
  padding: 0 2px;
  background: linear-gradient(#3e3d46, #222126);
  color: #fff;
  line-height: 8px;
}

.panel h2 span {
  display: flex;
  gap: 1px;
}

.panel h2 .icon {
  width: 6px;
}

.tools {
  display: flex;
  align-items: center;
  gap: 2px;
  height: 9px;
  padding: 0 1px;
  background: #f3f3f8;
}

.tools .last {
  margin-left: auto;
}

.on {
  display: flex;
  gap: 2px;
  background: var(--accent);
}

.tree {
  padding: 1px 0;
  list-style: none;
  background: #fff;
}

.tree li {
  display: flex;
  align-items: center;
  gap: 1px;
  height: 7px;
  white-space: nowrap;
}

.tree b {
  width: 4px;
  height: 4px;
  margin: 0 1px;
}

.tree .plus {
  border: 1px solid #d5d7de;
  background: #a9acb5;
}

.tree mark {
  background: #e9e9ed;
  color: inherit;
}

.parts {
  width: 78px;
}

.filter-label {
  padding-left: 4px;
  height: 7px;
  background: #f8f8fb;
}

.muted {
  color: #999;
}

.muted li {
  gap: 1px;
  padding-left: 5px;
}

.box {
  height: 66px;
  margin: 0 2px 0 3px;
  border: 1px solid var(--line);
}

.column-tools {
  display: flex;
  align-items: center;
  justify-content: space-between;
  height: 11px;
  padding-right: 1px;
}

.column-tools span {
  display: flex;
  border-right: 1px solid #91a6d5;
}

.columns {
  flex: 1;
  display: flex;
  background: #fff;
  border: 1px solid var(--line);
}

.columns i {
  width: 8px;
  border-right: 1px solid #bdc8e4;
}

.tabs {
  display: flex;
  height: 9px;
  gap: 1px;
}

.tabs button {
  height: 8px;
  padding: 0 2px;
  gap: 1px;
  border: 1px solid #c9cad3;
  border-top: 0;
  background: #f4f4f8;
}

.tabs .active {
  background: var(--accent);
  border-color: #dc9b5b;
  font-weight: bold;
}

.side-strip {
  width: 10px;
  padding-left: 1px;
  border-left: 1px solid #cfd0d9;
}

.side-strip button {
  writing-mode: vertical-rl;
  width: 8px;
  height: 35px;
  gap: 1px;
  border: 1px solid #aeb0ba;
  background: #d7d8e0;
}

.operations {
  width: 77px;
  border-left: 1px solid var(--line);
}

.fill {
  flex: 1;
  padding-left: 2px;
}

/* Document */
.document {
  flex: 1;
  min-width: 0;
  display: flex;
  flex-direction: column;
}

.tabs.top {
  height: 8px;
}

.tab-end {
  display: flex;
  gap: 1px;
  margin-left: auto;
  padding-right: 1px;
}

.viewport {
  position: relative;
  flex: 1;
  min-height: 0;
  background: var(--sky);
  border-bottom: 1px solid var(--line);
}

.model {
  position: absolute;
  width: 100%;
  height: 100%;
}

.model text {
  font-size: 5px;
}

.view-tools {
  position: absolute;
  top: 3px;
  right: 3px;
  display: flex;
  flex-direction: column;
}

.view-tools button {
  width: 13px;
  height: 12px;
}

.view-tools .icon {
  width: 10px;
  height: 10px;
}

.scale {
  position: absolute;
  right: 24px;
  bottom: 1px;
  width: 31px;
  border-bottom: 4px solid #e18a2c;
  text-align: center;
}

.handle {
  position: absolute;
  left: 48%;
  bottom: 0;
  width: 31px;
  height: 2px;
  background: #a5a5a9;
}

.results {
  padding: 0 4px;
}

.project {
  width: 80px;
  padding-left: 2px;
  padding-bottom: 8px;
}

.project .tools {
  justify-content: space-between;
}

.project .tree {
  flex: 1;
  padding-left: 2px;
}

.preview {
  height: 92px;
  border: 1px solid #7f8fb0;
  background: linear-gradient(#4b689d, #909fc4 50%, #dddde2);
}

.preview svg {
  width: 100%;
  height: 100%;
}

.project .tabs button {
  flex: 1;
  min-width: 0;
  padding: 0 1px;
}

/* Status line */
.status {
  display: flex;
  align-items: center;
  height: 9px;
}

.hint {
  width: 474px;
  padding-left: 3px;
}

.coords {
  display: flex;
  gap: 5px;
  margin-right: 10px;
}

.status .icon {
  margin-right: 12px;
}

.status .icon path {
  fill: #4a8fdc;
}

/* Taskbar */
.taskbar {
  display: flex;
  height: 16px;
  background: #1b1b1c;
  color: #fff;
}

.taskbar svg {
  width: 9px;
  height: 9px;
}

.taskbar .start {
  width: 19px;
  justify-content: center;
}

.taskbar .start svg,
.taskbar .search svg,
.taskbar .tray svg {
  width: 7px;
  height: 7px;
}

.search {
  display: flex;
  align-items: center;
  gap: 3px;
  width: 134px;
  padding-left: 5px;
  background: #f2f2f2;
}

.search input {
  flex: 1;
  min-width: 0;
  padding: 0;
  border: 0;
  background: none;
  font: inherit;
  font-size: 6px;
}

.search input::placeholder {
  color: #555;
}

.apps {
  display: flex;
}

.apps button {
  width: 19px;
  justify-content: center;
  border-bottom: 1px solid transparent;
}

.apps .open {
  border-color: #6eb2ea;
}

.apps .current {
  background: #434345;
}

.tray {
  display: flex;
  align-items: center;
  gap: 3px;
  margin-left: auto;
  padding-right: 8px;
}

.tray time {
  text-align: center;
}

.taskbar .tray .notice {
  width: 9px;
  height: 9px;
}
```
